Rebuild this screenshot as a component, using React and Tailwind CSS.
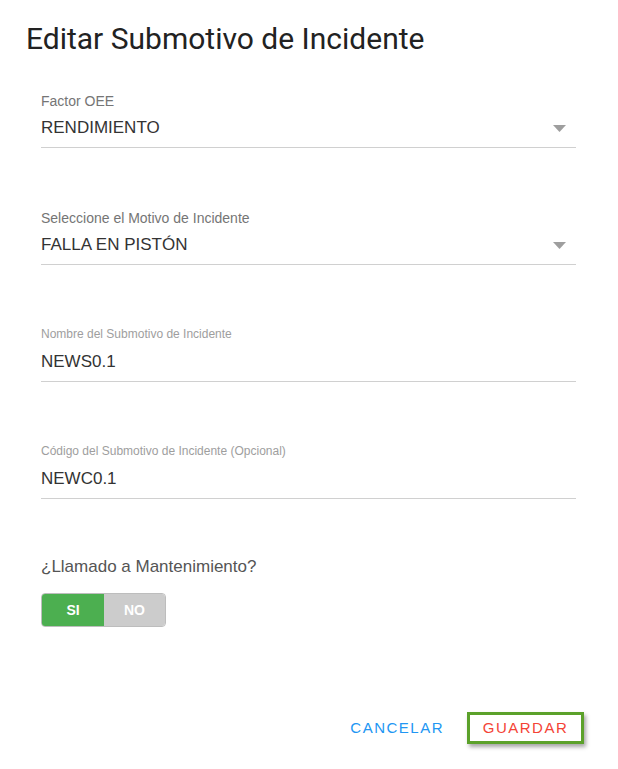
import React from "react";

function Caret() {
  return (
    <svg width="13" height="7" viewBox="0 0 13 7" className="shrink-0">
      <path d="M0 0 L13 0 L6.5 7 Z" fill="#9e9e9e" />
    </svg>
  );
}

function SelectField({ label, value }) {
  return (
    <div className="flex flex-col">
      <div className="text-[14px] leading-[16px] text-[#757575]">{label}</div>
      <div className="flex items-center justify-between pt-[9px] pb-[9px] pr-[10px] border-b border-[#d0d0d0] leading-[20px]">
        <span className="text-[17px] leading-[20px] text-[#333]">{value}</span>
        <Caret />
      </div>
    </div>
  );
}

function TextField({ label, value }) {
  return (
    <div className="flex flex-col">
      <div className="text-[12px] leading-[14px] text-[#9e9e9e]">{label}</div>
      <div className="pt-[11px] pb-[9px] border-b border-[#d0d0d0] text-[17px] leading-[20px] text-[#333]">
        {value}
      </div>
    </div>
  );
}

export default function App() {
  return (
    <div className="w-[618px] h-[769px] bg-white font-['Liberation_Sans',Arial,sans-serif] flex flex-col">
      <h1 className="font-['Roboto',sans-serif] text-[30px] leading-[34px] text-[#222] font-normal pl-[26px] pt-[22px]">
        Editar Submotivo de Incidente
      </h1>
      <div className="flex flex-col pl-[41px] pr-[42px] pt-[37px] gap-[62px]">
        <SelectField label="Factor OEE" value="RENDIMIENTO" />
        <SelectField label="Seleccione el Motivo de Incidente" value="FALLA EN PISTÓN" />
        <TextField label="Nombre del Submotivo de Incidente" value="NEWS0.1" />
        <TextField label="Código del Submotivo de Incidente (Opcional)" value="NEWC0.1" />
      </div>
      <div className="pl-[41px] pt-[58px] flex flex-col">
        <div className="text-[17px] leading-[20px] text-[#555]">¿Llamado a Mantenimiento?</div>
        <div className="mt-[16px] flex w-[125px] h-[34px] rounded-[4px] overflow-hidden border border-[#bdbdbd]">
          <div className="w-[62px] bg-[#4caf50] text-white font-bold text-[14px] flex items-center justify-center shadow-[0_2px_4px_rgba(0,0,0,0.2)]">
            SI
          </div>
          <div className="flex-1 bg-[#cccccc] text-white font-bold text-[14px] flex items-center justify-center">
            NO
          </div>
        </div>
      </div>
      <div className="flex justify-end items-center gap-[22px] pr-[34px] mt-[85px]">
        <button className="text-[#2196f3] text-[15px] tracking-[1.5px] px-[1px]">CANCELAR</button>
        <button className="text-[#f44336] text-[15px] tracking-[1.5px] w-[117px] h-[32px] border-[3px] border-[#5ba12a] shadow-[2px_3px_4px_rgba(0,0,0,0.35)] flex items-center justify-center">
          GUARDAR
        </button>
      </div>
    </div>
  );
}
